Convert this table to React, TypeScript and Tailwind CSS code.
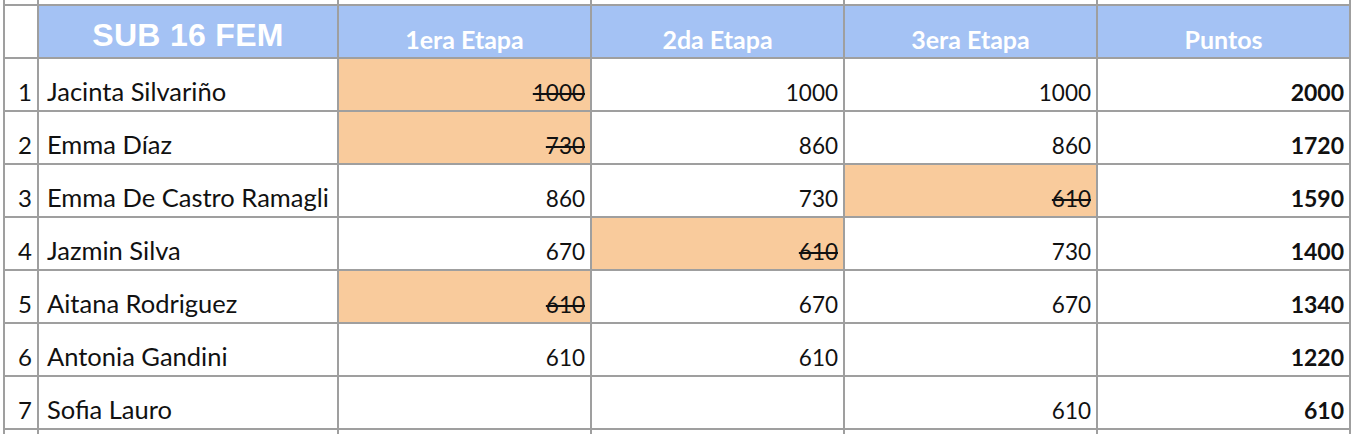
import React from "react";

type Row = {
  n: number;
  name: string;
  e1: string;
  e2: string;
  e3: string;
  pts: string;
  struck?: 1 | 2 | 3;
};

const rows: Row[] = [
  { n: 1, name: "Jacinta Silvariño", e1: "1000", e2: "1000", e3: "1000", pts: "2000", struck: 1 },
  { n: 2, name: "Emma Díaz", e1: "730", e2: "860", e3: "860", pts: "1720", struck: 1 },
  { n: 3, name: "Emma De Castro Ramagli", e1: "860", e2: "730", e3: "610", pts: "1590", struck: 3 },
  { n: 4, name: "Jazmin Silva", e1: "670", e2: "610", e3: "730", pts: "1400", struck: 2 },
  { n: 5, name: "Aitana Rodriguez", e1: "610", e2: "670", e3: "670", pts: "1340", struck: 1 },
  { n: 6, name: "Antonia Gandini", e1: "610", e2: "610", e3: "", pts: "1220" },
  { n: 7, name: "Sofia Lauro", e1: "", e2: "", e3: "610", pts: "610" },
];

const font = "font-['Lato','Open_Sans',sans-serif] leading-none text-[#111]";

function StageCell({ value, struck }: { value: string; struck: boolean }) {
  return (
    <div
      className={`h-[51px] flex items-end justify-end pr-[5px] pb-[6px] text-[22.5px] ${font} ${
        struck ? "bg-[#f9cb9c] line-through decoration-[1.5px]" : "bg-white"
      }`}
    >
      {value}
    </div>
  );
}

export default function App() {
  const head = "h-[51px] bg-[#a4c2f4] flex items-end justify-center text-white font-bold leading-none";
  return (
    <div className="bg-white w-[1358px] h-[434px] overflow-hidden">
      <div className="ml-[3px] w-[1348px] grid grid-cols-[32px_298px_251px_251px_251px_251px] gap-[2px] px-[2px] bg-[#9f9f9f]">
        {/* tail of the row above */}
        {Array.from({ length: 6 }).map((_, i) => (
          <div key={`t${i}`} className="h-[4px] bg-white" />
        ))}

        {/* header */}
        <div className="h-[51px] bg-white" />
        <div className={`${head} pb-[6px] font-['Liberation_Sans',Arial,sans-serif] text-[32px] tracking-[0.3px]`}>
          SUB 16 FEM
        </div>
        {["1era Etapa", "2da Etapa", "3era Etapa", "Puntos"].map((h) => (
          <div key={h} className={`${head} pb-[5px] font-['Lato',sans-serif] text-[25px]`}>
            {h}
          </div>
        ))}

        {rows.map((r) => (
          <React.Fragment key={r.n}>
            <div className={`h-[51px] bg-white flex items-end justify-end pr-[5px] pb-[6px] text-[24px] ${font}`}>
              {r.n}
            </div>
            <div className={`h-[51px] bg-white flex items-end pl-[8px] pb-[6px] text-[25.5px] ${font}`}>{r.name}</div>
            <StageCell value={r.e1} struck={r.struck === 1} />
            <StageCell value={r.e2} struck={r.struck === 2} />
            <StageCell value={r.e3} struck={r.struck === 3} />
            <div className={`h-[51px] bg-white flex items-end justify-end pr-[5px] pb-[6px] font-bold text-[23px] ${font}`}>
              {r.pts}
            </div>
          </React.Fragment>
        ))}

        {/* top of the next row */}
        {Array.from({ length: 6 }).map((_, i) => (
          <div key={`b${i}`} className="h-[10px] bg-white" />
        ))}
      </div>
    </div>
  );
}
